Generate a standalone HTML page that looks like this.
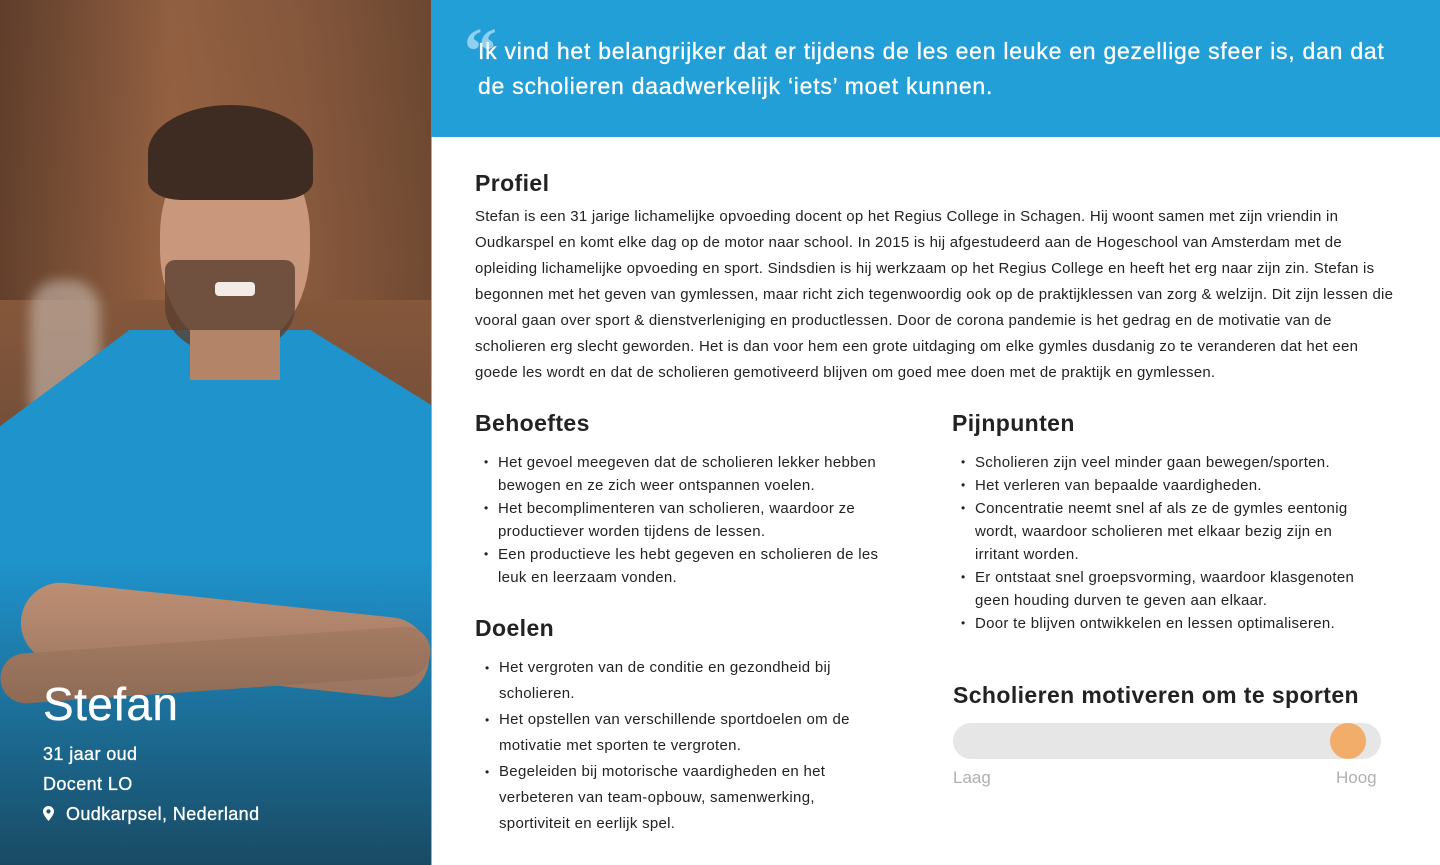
<!DOCTYPE html>
<html><head><meta charset="utf-8"><style>
*{margin:0;padding:0;box-sizing:border-box}
body{width:1440px;height:865px;overflow:hidden;background:#fff;font-family:"Liberation Sans",sans-serif;color:#222;position:relative}
.photo{position:absolute;left:0;top:0;width:431px;height:865px;overflow:hidden;background:linear-gradient(180deg,#6e4a34 0%,#8a5a3c 30%,#6a4a38 60%,#3a2a24 100%)}
.photo div{position:absolute}
.hdr{position:absolute;left:431px;top:0;width:1009px;height:137px;background:#239fd8}
.q{position:absolute;left:478px;top:34px;color:#fff;font-size:23px;line-height:35px;width:940px;letter-spacing:0.75px;-webkit-text-stroke:0.3px #fff}
.qm{position:absolute;left:464px;top:14px;color:#8fd0f0;font-size:66px;font-family:"Liberation Serif",serif;font-weight:bold}
h2{position:absolute;font-size:23px;font-weight:bold;color:#222;letter-spacing:0.4px}
p.b{position:absolute;left:475px;top:204px;width:925px;font-size:15px;line-height:26px;color:#222;letter-spacing:0.25px}
ul{position:absolute;list-style:none;font-size:15px;color:#222;letter-spacing:0.3px}
li{position:relative;padding-left:23px}
li:before{content:"•";position:absolute;left:9px;font-size:12px}
.l23 li{line-height:23px}.l26 li{line-height:26px}
.info{position:absolute;left:43px;color:#fff;letter-spacing:0.4px;-webkit-text-stroke:0.3px #fff}
</style></head><body>
<div class="photo">
 <div style="left:0;top:0;width:431px;height:300px;background:linear-gradient(90deg,#5a3a28,#9a6444 40%,#8a5a3e 70%,#6a4630);opacity:.8"></div>
 <div style="left:30px;top:280px;width:70px;height:150px;background:#d8d0c8;border-radius:30px;opacity:.5;filter:blur(6px)"></div>
 <div style="left:0;top:330px;width:431px;height:535px;background:#1f93cc;clip-path:polygon(30% 0,72% 0,100% 14%,100% 100%,0 100%,0 18%)"></div>
 <div style="left:160px;top:140px;width:150px;height:210px;background:#c8977c;border-radius:45% 45% 48% 48%"></div>
 <div style="left:148px;top:105px;width:165px;height:95px;background:#3e2c22;border-radius:50% 50% 20% 20%"></div>
 <div style="left:165px;top:260px;width:130px;height:95px;background:#5a3e30;border-radius:10px 10px 50% 50%;opacity:.8"></div>
 <div style="left:215px;top:282px;width:40px;height:14px;background:#f3ece6;border-radius:4px"></div>
 <div style="left:190px;top:330px;width:90px;height:50px;background:#b48468"></div>
 <div style="left:20px;top:600px;width:410px;height:80px;background:#c49478;border-radius:40px;transform:rotate(6deg)"></div>
 <div style="left:0;top:640px;width:431px;height:50px;background:#b88a6e;border-radius:30px;transform:rotate(-4deg)"></div>
 <div style="left:0;top:560px;width:431px;height:305px;background:linear-gradient(180deg,rgba(0,0,0,0),rgba(20,15,15,.55))"></div>
</div>
<div style="position:absolute;left:431px;top:0;width:1px;height:865px;background:#aaa"></div>
<div class="info" style="top:676px;font-size:46px;line-height:56px">Stefan</div>
<div class="info" style="top:741px;font-size:18px;line-height:26px">31 jaar oud</div>
<div class="info" style="top:771px;font-size:18px;line-height:26px">Docent LO</div>
<svg style="position:absolute;left:43px;top:806px" width="11" height="15" viewBox="0 0 11 15"><path d="M5.5 0C2.5 0 0 2.4 0 5.4 0 9 5.5 15 5.5 15S11 9 11 5.4C11 2.4 8.5 0 5.5 0zm0 7.5a2.1 2.1 0 110-4.2 2.1 2.1 0 010 4.2z" fill="#fff"/></svg>
<div class="info" style="left:66px;top:801px;font-size:18px;line-height:26px">Oudkarpsel, Nederland</div>
<div class="hdr"></div>
<div class="qm">“</div>
<div class="q">Ik vind het belangrijker dat er tijdens de les een leuke en gezellige sfeer is, dan dat de scholieren daadwerkelijk ‘iets’ moet kunnen.</div>
<h2 style="left:475px;top:170px">Profiel</h2>
<p class="b">Stefan is een 31 jarige lichamelijke opvoeding docent op het Regius College in Schagen. Hij woont samen met zijn vriendin in Oudkarspel en komt elke dag op de motor naar school. In 2015 is hij afgestudeerd aan de Hogeschool van Amsterdam met de opleiding lichamelijke opvoeding en sport. Sindsdien is hij werkzaam op het Regius College en heeft het erg naar zijn zin. Stefan is begonnen met het geven van gymlessen, maar richt zich tegenwoordig ook op de praktijklessen van zorg &amp; welzijn. Dit zijn lessen die vooral gaan over sport &amp; dienstverleniging en productlessen. Door de corona pandemie is het gedrag en de motivatie van de scholieren erg slecht geworden. Het is dan voor hem een grote uitdaging om elke gymles dusdanig zo te veranderen dat het een goede les wordt en dat de scholieren gemotiveerd blijven om goed mee doen met de praktijk en gymlessen.</p>
<h2 style="left:475px;top:410px">Behoeftes</h2>
<ul class="l23" style="left:475px;top:451px;width:420px">
<li>Het gevoel meegeven dat de scholieren lekker hebben bewogen en ze zich weer ontspannen voelen.</li>
<li>Het becomplimenteren van scholieren, waardoor ze productiever worden tijdens de lessen.</li>
<li>Een productieve les hebt gegeven en scholieren de les leuk en leerzaam vonden.</li></ul>
<h2 style="left:475px;top:615px">Doelen</h2>
<ul class="l26" style="left:476px;top:655px;width:410px">
<li>Het vergroten van de conditie en gezondheid bij scholieren.</li>
<li>Het opstellen van verschillende sportdoelen om de motivatie met sporten te vergroten.</li>
<li>Begeleiden bij motorische vaardigheden en het verbeteren van team-opbouw, samenwerking, sportiviteit en eerlijk spel.</li></ul>
<h2 style="left:952px;top:410px">Pijnpunten</h2>
<ul class="l23" style="left:952px;top:451px;width:415px">
<li>Scholieren zijn veel minder gaan bewegen/sporten.</li>
<li>Het verleren van bepaalde vaardigheden.</li>
<li>Concentratie neemt snel af als ze de gymles eentonig wordt, waardoor scholieren met elkaar bezig zijn en irritant worden.</li>
<li>Er ontstaat snel groepsvorming, waardoor klasgenoten geen houding durven te geven aan elkaar.</li>
<li>Door te blijven ontwikkelen en lessen optimaliseren.</li></ul>
<h2 style="left:953px;top:682px">Scholieren motiveren om te sporten</h2>
<div style="position:absolute;left:953px;top:723px;width:428px;height:36px;border-radius:18px;background:#e6e6e6"></div>
<div style="position:absolute;left:1330px;top:723px;width:36px;height:36px;border-radius:50%;background:#f2ad6a"></div>
<div style="position:absolute;left:953px;top:768px;font-size:17px;color:#b0b0b0">Laag</div>
<div style="position:absolute;left:1336px;top:768px;font-size:17px;color:#b0b0b0">Hoog</div>
</body></html>
